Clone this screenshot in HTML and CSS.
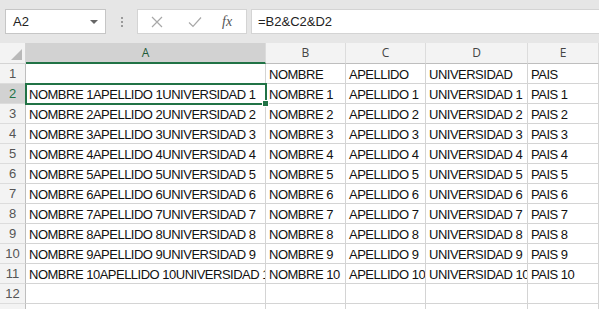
FILE: index.html
```html
<!DOCTYPE html>
<html>
	<head>
		<meta http-equiv="Content-Type" content="text/html; charset=UTF-8" />
		<title>Libro1 - Excel</title>
		<link rel="stylesheet" href="styles.css">
	</head>

	<body>
		<div class="toolbar">
			<div class="namebox">
				<span>A2</span>
				<svg class="caret" width="8" height="5" viewBox="0 0 8 5"><path d="M0 0 L8 0 L4 4 Z" fill="#666"/></svg>
			</div>
			<div class="grip">
				<i></i><i></i><i></i>
			</div>
			<div class="fbuttons">
				<svg width="12" height="12" viewBox="0 0 12 12"><path d="M1 1 L11 11 M11 1 L1 11" stroke="#a8a8a8" stroke-width="1.2" fill="none"/></svg>
				<svg width="14" height="12" viewBox="0 0 14 12"><path d="M1 6.5 L5 10.5 L13 1.5" stroke="#a8a8a8" stroke-width="1.2" fill="none"/></svg>
				<span class="fx">fx</span>
			</div>
			<div class="formula">=B2&amp;C2&amp;D2</div>
		</div>

		<div class="sheet">
			<div class="corner"></div>
			<div class="colhead active">A</div>
			<div class="colhead">B</div>
			<div class="colhead">C</div>
			<div class="colhead">D</div>
			<div class="colhead">E</div>

			<div class="rowhead">1</div>
			<div class="cell"></div>
			<div class="cell">NOMBRE</div>
			<div class="cell">APELLIDO</div>
			<div class="cell">UNIVERSIDAD</div>
			<div class="cell">PAIS</div>

			<div class="rowhead active">2</div>
			<div class="cell selected">NOMBRE 1APELLIDO 1UNIVERSIDAD 1</div>
			<div class="cell">NOMBRE 1</div>
			<div class="cell">APELLIDO 1</div>
			<div class="cell">UNIVERSIDAD 1</div>
			<div class="cell">PAIS 1</div>

			<div class="rowhead">3</div>
			<div class="cell">NOMBRE 2APELLIDO 2UNIVERSIDAD 2</div>
			<div class="cell">NOMBRE 2</div>
			<div class="cell">APELLIDO 2</div>
			<div class="cell">UNIVERSIDAD 2</div>
			<div class="cell">PAIS 2</div>

			<div class="rowhead">4</div>
			<div class="cell">NOMBRE 3APELLIDO 3UNIVERSIDAD 3</div>
			<div class="cell">NOMBRE 3</div>
			<div class="cell">APELLIDO 3</div>
			<div class="cell">UNIVERSIDAD 3</div>
			<div class="cell">PAIS 3</div>

			<div class="rowhead">5</div>
			<div class="cell">NOMBRE 4APELLIDO 4UNIVERSIDAD 4</div>
			<div class="cell">NOMBRE 4</div>
			<div class="cell">APELLIDO 4</div>
			<div class="cell">UNIVERSIDAD 4</div>
			<div class="cell">PAIS 4</div>

			<div class="rowhead">6</div>
			<div class="cell">NOMBRE 5APELLIDO 5UNIVERSIDAD 5</div>
			<div class="cell">NOMBRE 5</div>
			<div class="cell">APELLIDO 5</div>
			<div class="cell">UNIVERSIDAD 5</div>
			<div class="cell">PAIS 5</div>

			<div class="rowhead">7</div>
			<div class="cell">NOMBRE 6APELLIDO 6UNIVERSIDAD 6</div>
			<div class="cell">NOMBRE 6</div>
			<div class="cell">APELLIDO 6</div>
			<div class="cell">UNIVERSIDAD 6</div>
			<div class="cell">PAIS 6</div>

			<div class="rowhead">8</div>
			<div class="cell">NOMBRE 7APELLIDO 7UNIVERSIDAD 7</div>
			<div class="cell">NOMBRE 7</div>
			<div class="cell">APELLIDO 7</div>
			<div class="cell">UNIVERSIDAD 7</div>
			<div class="cell">PAIS 7</div>

			<div class="rowhead">9</div>
			<div class="cell">NOMBRE 8APELLIDO 8UNIVERSIDAD 8</div>
			<div class="cell">NOMBRE 8</div>
			<div class="cell">APELLIDO 8</div>
			<div class="cell">UNIVERSIDAD 8</div>
			<div class="cell">PAIS 8</div>

			<div class="rowhead">10</div>
			<div class="cell">NOMBRE 9APELLIDO 9UNIVERSIDAD 9</div>
			<div class="cell">NOMBRE 9</div>
			<div class="cell">APELLIDO 9</div>
			<div class="cell">UNIVERSIDAD 9</div>
			<div class="cell">PAIS 9</div>

			<div class="rowhead">11</div>
			<div class="cell">NOMBRE 10APELLIDO 10UNIVERSIDAD 10</div>
			<div class="cell">NOMBRE 10</div>
			<div class="cell">APELLIDO 10</div>
			<div class="cell">UNIVERSIDAD 10</div>
			<div class="cell">PAIS 10</div>

			<div class="rowhead">12</div>
			<div class="cell"></div>
			<div class="cell"></div>
			<div class="cell"></div>
			<div class="cell"></div>
			<div class="cell"></div>

			<div class="rowhead">13</div>
			<div class="cell"></div>
			<div class="cell"></div>
			<div class="cell"></div>
			<div class="cell"></div>
			<div class="cell"></div>
		</div>
	</body>
</html>
```

FILE: styles.css
```css
html, body {
	margin: 0;
	padding: 0;
	overflow: hidden;
}
body {
	background-color: #fff;
	font-family: "Liberation Sans", Arial, sans-serif;
}
.toolbar {
	align-items: center;
	background-color: #e6e6e6;
	box-sizing: border-box;
	display: flex;
	height: 43px;
	padding: 9px 0 9px 5px;
}
.namebox {
	align-items: center;
	background-color: #fff;
	border: 1px solid #c6c6c6;
	box-sizing: border-box;
	color: #222;
	display: flex;
	font-size: 13px;
	height: 25px;
	justify-content: space-between;
	padding: 0 7px 0 7px;
	width: 101px;
}
.caret {
	margin-top: 1px;
}
.grip {
	align-items: center;
	display: flex;
	flex-direction: column;
	gap: 2px;
	margin: 0 14px 0 15px;
}
.grip i {
	background-color: #9a9a9a;
	display: block;
	height: 2px;
	width: 2px;
}
.fbuttons {
	align-items: center;
	background-color: #fff;
	border: 1px solid #d4d4d4;
	box-sizing: border-box;
	display: flex;
	height: 25px;
	padding: 0 0 0 13px;
	width: 110px;
}
.fbuttons svg:nth-child(2) {
	margin-left: 25px;
}
.fx {
	color: #555;
	font-family: "Liberation Serif", serif;
	font-size: 14px;
	font-style: italic;
	margin-left: 20px;
}
.formula {
	align-items: center;
	background-color: #fff;
	border: 1px solid #d4d4d4;
	border-right: none;
	box-sizing: border-box;
	color: #222;
	display: flex;
	flex: 1;
	font-size: 13px;
	height: 25px;
	margin-left: 4px;
	padding-left: 6px;
}

.sheet {
	display: grid;
	grid-template-columns: 26px 240px 80px 80px 102px 1fr;
	grid-template-rows: 21px;
	grid-auto-rows: 20px;
}
.sheet > div {
	border-bottom: 1px solid #d4d4d4;
	border-right: 1px solid #d4d4d4;
	box-sizing: border-box;
	overflow: hidden;
	white-space: nowrap;
}
.corner {
	background-color: #f3f3f3;
	position: relative;
}
.corner::after {
	border-bottom: 11px solid #b9b9b9;
	border-left: 11px solid transparent;
	bottom: 3px;
	content: "";
	position: absolute;
	right: 3px;
}
.colhead {
	background-color: #f3f3f3;
	color: #444;
	font-family: "Open Sans", sans-serif;
	font-size: 12px;
	line-height: 20px;
	text-align: center;
}
.sheet > .colhead {
	border-right-color: #dcdcdc;
	border-bottom-color: #bebebe;
}
.sheet > .colhead.active {
	background-color: #d2d2d2;
	border-bottom: 2px solid #217346;
	color: #1e5c38;
	line-height: 19px;
}
.rowhead {
	background-color: #f3f3f3;
	color: #555;
	font-size: 13px;
	line-height: 19px;
	text-align: center;
}
.sheet > .rowhead {
	border-right-color: #bebebe;
	border-bottom-color: #dcdcdc;
}
.sheet > .rowhead.active {
	background-color: #d2d2d2;
	color: #217346;
}
.cell {
	color: #111;
	font-size: 13px;
	letter-spacing: -0.5px;
	line-height: 21px;
	padding-left: 3px;
}
.sheet > .selected {
	overflow: visible;
	position: relative;
}
.selected::before {
	border: 2px solid #217346;
	bottom: -2px;
	content: "";
	left: -1px;
	position: absolute;
	right: -2px;
	top: -1px;
}
.selected::after {
	background-color: #217346;
	border: 1px solid #fff;
	bottom: -4px;
	content: "";
	height: 5px;
	position: absolute;
	right: -4px;
	width: 5px;
}
```
